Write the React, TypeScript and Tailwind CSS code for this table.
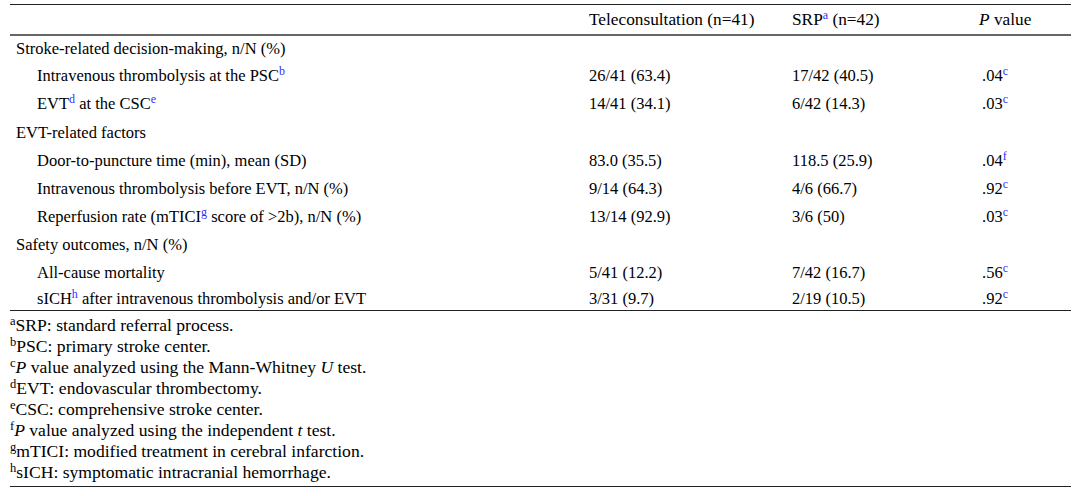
const serif = { fontFamily: '"Liberation Serif", "Times New Roman", serif' };

type Row = {
  label: React.ReactNode;
  section?: boolean;
  tele?: string;
  srp?: string;
  p?: string;
  pNote?: string;
  h: string;
};

function Sup({ children }: { children: React.ReactNode }) {
  return <sup className="text-[12px] text-[#2f2fff]">{children}</sup>;
}

const rows: Row[] = [
  { label: 'Stroke-related decision-making, n/N (%)', section: true, h: 'h-[26px]' },
  {
    label: (
      <>
        Intravenous thrombolysis at the PSC<Sup>b</Sup>
      </>
    ),
    tele: '26/41 (63.4)',
    srp: '17/42 (40.5)',
    p: '.04',
    pNote: 'c',
    h: 'h-[28px]',
  },
  {
    label: (
      <>
        EVT<Sup>d</Sup> at the CSC<Sup>e</Sup>
      </>
    ),
    tele: '14/41 (34.1)',
    srp: '6/42 (14.3)',
    p: '.03',
    pNote: 'c',
    h: 'h-[29px]',
  },
  { label: 'EVT-related factors', section: true, h: 'h-[28px]' },
  {
    label: 'Door-to-puncture time (min), mean (SD)',
    tele: '83.0 (35.5)',
    srp: '118.5 (25.9)',
    p: '.04',
    pNote: 'f',
    h: 'h-[28px]',
  },
  {
    label: 'Intravenous thrombolysis before EVT, n/N (%)',
    tele: '9/14 (64.3)',
    srp: '4/6 (66.7)',
    p: '.92',
    pNote: 'c',
    h: 'h-[28px]',
  },
  {
    label: (
      <>
        Reperfusion rate (mTICI<Sup>g</Sup> score of &gt;2b), n/N (%)
      </>
    ),
    tele: '13/14 (92.9)',
    srp: '3/6 (50)',
    p: '.03',
    pNote: 'c',
    h: 'h-[28px]',
  },
  { label: 'Safety outcomes, n/N (%)', section: true, h: 'h-[28px]' },
  {
    label: 'All-cause mortality',
    tele: '5/41 (12.2)',
    srp: '7/42 (16.7)',
    p: '.56',
    pNote: 'c',
    h: 'h-[28px]',
  },
  {
    label: (
      <>
        sICH<Sup>h</Sup> after intravenous thrombolysis and/or EVT
      </>
    ),
    tele: '3/31 (9.7)',
    srp: '2/19 (10.5)',
    p: '.92',
    pNote: 'c',
    h: 'h-[23px]',
  },
];

const notes: [string, React.ReactNode][] = [
  ['a', 'SRP: standard referral process.'],
  ['b', 'PSC: primary stroke center.'],
  [
    'c',
    <>
      <i>P</i> value analyzed using the Mann-Whitney <i>U</i> test.
    </>,
  ],
  ['d', 'EVT: endovascular thrombectomy.'],
  ['e', 'CSC: comprehensive stroke center.'],
  [
    'f',
    <>
      <i>P</i> value analyzed using the independent <i>t</i> test.
    </>,
  ],
  ['g', 'mTICI: modified treatment in cerebral infarction.'],
  ['h', 'sICH: symptomatic intracranial hemorrhage.'],
];

const grid = 'grid grid-cols-[579px_203px_187px_1fr] items-center';

export default function App() {
  return (
    <div className="h-[496px] w-[1080px] bg-white pt-[4px] text-[16.5px] text-black" style={serif}>
      <div className="ml-[10px] w-[1061px] border-t border-b border-[#222]">
        {/* header */}
        <div className={`${grid} h-[31px] border-b-2 border-[#666] text-[17.3px]`}>
          <div />
          <div>Teleconsultation (n=41)</div>
          <div>
            SRP<Sup>a</Sup> (n=42)
          </div>
          <div>
            <i>P</i> value
          </div>
        </div>

        {/* body */}
        <div className="border-b border-[#222]">
          {rows.map((r, i) => (
            <div key={i} className={`${grid} ${r.h}`}>
              <div className={r.section ? 'pl-[6px]' : 'pl-[27px]'}>{r.label}</div>
              <div>{r.tele}</div>
              <div>{r.srp}</div>
              <div className="pl-[3px]">
                {r.p}
                {r.pNote && <Sup>{r.pNote}</Sup>}
              </div>
            </div>
          ))}
        </div>

        {/* footnotes */}
        <div className="pt-[4px] pb-[3px] text-[17.6px] leading-[21px]">
          {notes.map(([k, t]) => (
            <div key={k}>
              <sup className="text-[12.5px]">{k}</sup>
              {t}
            </div>
          ))}
        </div>
      </div>
    </div>
  );
}
